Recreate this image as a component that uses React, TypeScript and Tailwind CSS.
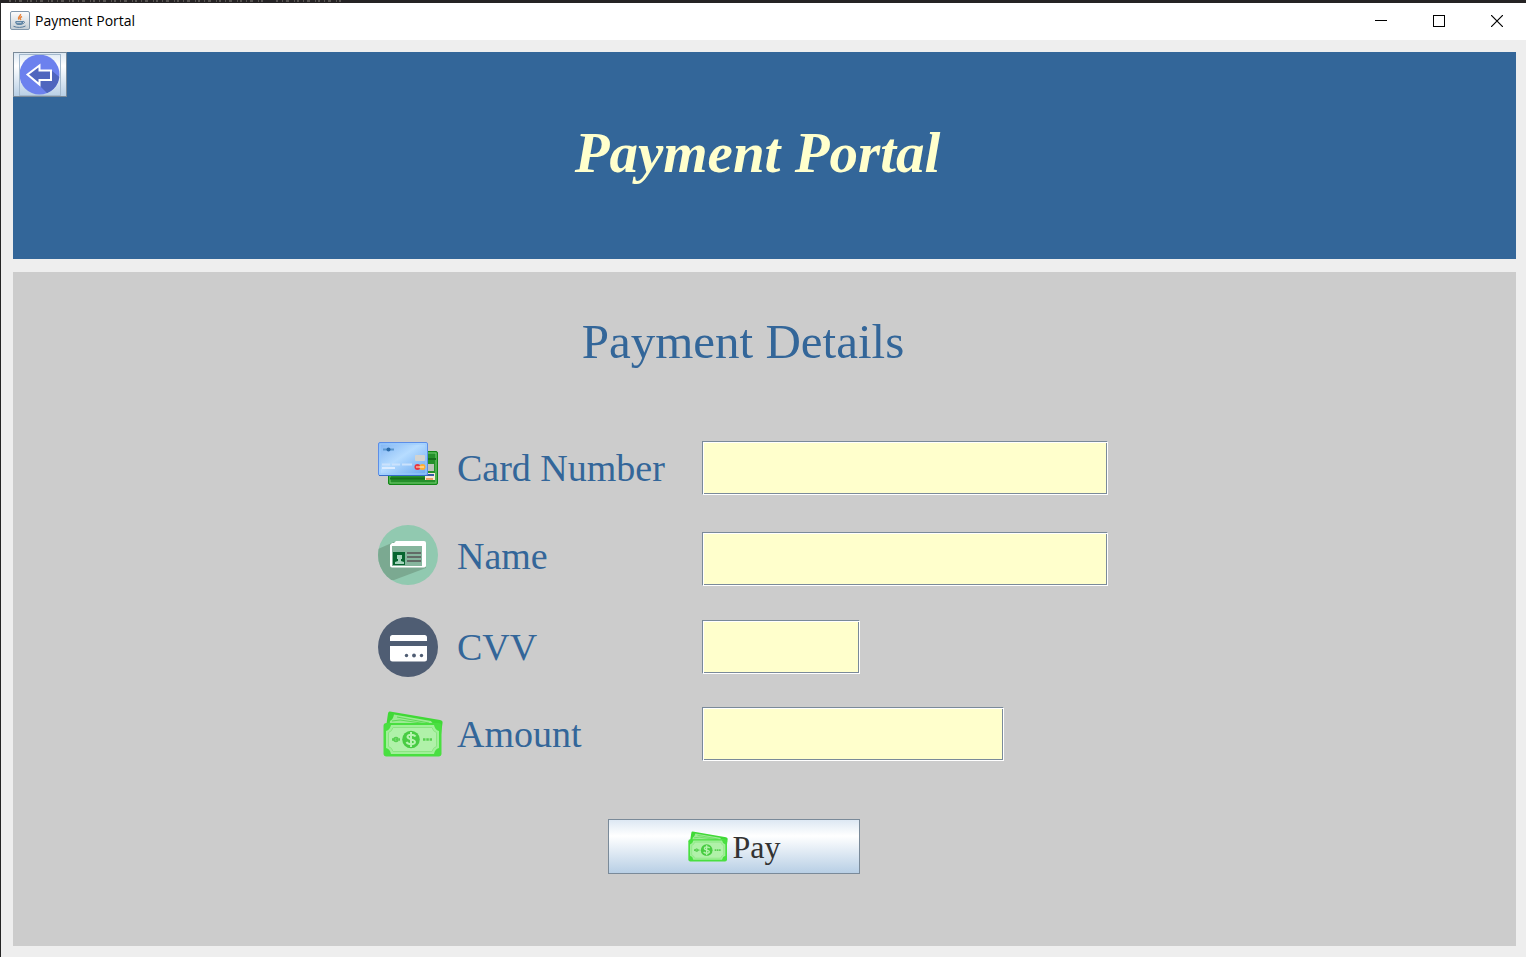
import React from "react";

function JavaIcon() {
  return (
    <svg width="20" height="20" viewBox="0 0 20 20" aria-hidden="true" className="shrink-0">
      <defs>
        <linearGradient id="javaBg" x1="0" y1="0" x2="0" y2="1">
          <stop offset="0" stopColor="#fdfdfd" />
          <stop offset="1" stopColor="#c3cdd3" />
        </linearGradient>
      </defs>
      <rect x="0.5" y="0.5" width="19" height="18" rx="1.500" fill="url(#javaBg)" stroke="#8298ac" />
      <path d="M10.500 3c1 1.600-3.500 2.800-1.500 5.500M12 5.500c-2 1-2.500 2-1 3.500" fill="none" stroke="#e8833a" strokeWidth="1.400" />
      <path d="M5.500 10h7.500v1.500c0 2-1 2.500-3.500 2.500s-4-.5-4-2.500z" fill="#5f86a5" />
      <path d="M13 10.500c2-.5 2 2-.5 2.300M3.500 15.300c3 1.500 9 1.500 12-.3M5.500 11.500h7" fill="none" stroke="#54799a" strokeWidth="1" />
      <path d="M6.500 11.600h5" stroke="#d5e0e8" strokeWidth="0.800" />
    </svg>
  );
}

function BackIcon() {
  return (
    <svg width="42" height="42" viewBox="0 0 42 42" aria-hidden="true">
      <defs>
        <clipPath id="backDisc">
          <circle cx="20.500" cy="20.500" r="20" />
        </clipPath>
      </defs>
      <circle cx="20.500" cy="20.500" r="20" fill="#6c81ee" />
      <path d="M20 31l1-4h11V16l12 10v16H31z" fill="#5066be" clipPath="url(#backDisc)" />
      <path d="M8.500 20.500l12-9v5h11.500v9.500H20.500v4.500z" fill="#5066be" stroke="#fff" strokeWidth="2" />
    </svg>
  );
}

function CardsIcon() {
  return (
    <svg width="60" height="44" viewBox="0 0 60 44" aria-hidden="true">
      <defs>
        <linearGradient id="blueCard" x1="0" y1="0" x2="1" y2="1">
          <stop offset="0" stopColor="#7eb2f2" />
          <stop offset="0.450" stopColor="#b6dcff" />
          <stop offset="1" stopColor="#65a4ef" />
        </linearGradient>
      </defs>
      <rect x="10.500" y="9.500" width="49" height="33" rx="1.500" fill="#25902b" stroke="#128716" />
      <rect x="12" y="11" width="46" height="30" fill="none" stroke="#74cf70" />
      <path d="M12 36.500h35M50 17h8" stroke="#176f1c" strokeWidth="2" />
      <rect x="48" y="22" width="8" height="7" fill="#bec5ba" />
      <rect x="47" y="31" width="10" height="7" fill="#f7e8d5" />
      <path d="M48 32h8v2h-8z" fill="#365ca7" />
      <path d="M48 36h7v2h-7z" fill="#eca26a" />
      <rect x="0.500" y="0.500" width="49" height="33" rx="1.500" fill="url(#blueCard)" stroke="#5c8ee8" />
      <rect x="2" y="2" width="46" height="30" fill="none" stroke="#9acbfd" />
      <path d="M1 33.500h48" stroke="#376dcb" />
      <path d="M5 7.500h4M12 7.500h4" stroke="#5b97d0" strokeWidth="2" />
      <circle cx="10.500" cy="7.500" r="2" fill="#296aa9" />
      <rect x="37" y="13" width="10" height="6" rx="1" fill="#d3d3cf" />
      <path d="M4 22.500h8M14 22.500h8M24 22.500h10" stroke="#cbe2fc" strokeWidth="2" />
      <path d="M4 26h13" stroke="#dcecff" strokeWidth="2" />
      <circle cx="39.500" cy="25" r="3" fill="#e93440" />
      <circle cx="44.500" cy="25" r="3" fill="#ffae32" />
      <path d="M38 25h8" stroke="#fff2ce" strokeWidth="1" />
    </svg>
  );
}

function IdIcon() {
  return (
    <svg width="60" height="61" viewBox="0 0 60 61" aria-hidden="true">
      <defs>
        <clipPath id="idDisc">
          <circle cx="30" cy="30" r="30" />
        </clipPath>
      </defs>
      <circle cx="30" cy="30" r="30" fill="#91c9b0" />
      <path d="M16 17L-2 25v30h18l32-12V20z" fill="#7ba991" clipPath="url(#idDisc)" />
      <path d="M18 16h28a2 2 0 0 1 2 2v22a2 2 0 0 1-2 2.500H14a2 2 0 0 1-2-2V20l2-2h2z" fill="#fff" />
      <rect x="14" y="21" width="30" height="20" fill="#86b59d" />
      <rect x="15" y="27" width="12" height="13" fill="#07652f" />
      <path d="M19 30h5v4h-1v2l3 1v2h-9v-2l3-1v-2h-1z" fill="#a4d4bc" />
      <path d="M29 28h14M29 32h14M29 36h14" stroke="#626b66" strokeWidth="2" />
    </svg>
  );
}

function CvvIcon() {
  return (
    <svg width="60" height="60" viewBox="0 0 60 60" aria-hidden="true">
      <circle cx="30" cy="30" r="30" fill="#4f5d73" />
      <rect x="12" y="18" width="37" height="26.500" rx="2.500" fill="#fff" />
      <path d="M12 24h37v5H12z" fill="#4f5d73" />
      <circle cx="28.500" cy="38.500" r="1.700" fill="#4f5d73" />
      <circle cx="36" cy="38.500" r="1.900" fill="#4f5d73" />
      <circle cx="43.500" cy="38.500" r="1.700" fill="#4f5d73" />
    </svg>
  );
}

function MoneyIcon({ className }: { className: string }) {
  return (
    <svg className={className} viewBox="0 0 60 46" aria-hidden="true">
      <path d="M7 0.500L57 9q3 .5 2.500 3l-4 31L3 16 5 2.500Q5.500 0 7 .5z" fill="#40d936" />
      <path d="M11 3.500l37 6.500q1 3 5.500 3l-1 6H6l1-9q3-1.500 4-6.500z" fill="#9ceb93" />
      <path d="M14 6l32 6M9 10l8-1 28 4" stroke="#5ed955" strokeWidth="1" fill="none" />
      <rect x="0.500" y="12" width="58" height="33.500" rx="3" fill="#49df40" />
      <path d="M8 14h43q1 5 5 6v17q-4 1-5 6H8q-1-5-5-6V20q4-1 5-6z" fill="#a1f099" />
      <path d="M10 16.500h39q1 4 4.500 5v14q-3.500 1-4.500 5H10q-1-4-4.500-5v-14q3.500-1 4.500-5z" fill="#b0f1a9" stroke="#8be582" />
      <circle cx="28" cy="28.500" r="8.800" fill="#48cc42" />
      <path d="M32.500 25.500c-1-2-7.500-3-8 .2-.3 3.300 7.500 2 7.500 5.300 0 3-7 2.800-8.500 0M28 21v15" fill="none" stroke="#b7f4b0" strokeWidth="2" />
      <circle cx="13" cy="28.500" r="2" fill="none" stroke="#57cf50" strokeWidth="1.500" />
      <path d="M9 28.500h8M40 28.500h9" stroke="#57cf50" strokeWidth="2.500" strokeDasharray="2.500 0.800" />
    </svg>
  );
}

const fields = [
  { id: "card-number", label: "Card Number", width: "w-full", icon: <CardsIcon />, iconAlign: "items-center pb-2" },
  { id: "name", label: "Name", width: "w-full", icon: <IdIcon />, iconAlign: "items-start" },
  { id: "cvv", label: "CVV", width: "w-[158px]", icon: <CvvIcon />, iconAlign: "items-end" },
  { id: "amount", label: "Amount", width: "w-[302px]", icon: <MoneyIcon className="h-[46px] w-[60px]" />, iconAlign: "items-center justify-end" },
];

export default function App() {
  return (
    <div className="flex min-h-screen flex-col border-l border-[#252525] bg-[#eee] font-['Liberation_Serif',serif]">
      <div className="h-[3px] bg-[#252324]">
        <svg width="344" height="2" aria-hidden="true" className="block">
          <path d="M8 1h254M275 1h67" stroke="#77736f" strokeWidth="2" strokeDasharray="2 4 1 3 3 5 1 2" opacity="0.600" />
        </svg>
      </div>
      <div className="flex h-[37px] items-center bg-white pb-0.5 pl-[9px] text-black">
        <JavaIcon />
        <span className="ml-[5px] font-['Open_Sans',sans-serif] text-sm">Payment Portal</span>
        <div className="ml-auto flex h-full">
          <button type="button" aria-label="Minimize" className="flex w-[58px] items-center justify-center">
            <svg width="12" height="12" aria-hidden="true"><path d="M0 5.500h12" stroke="#000" /></svg>
          </button>
          <button type="button" aria-label="Maximize" className="flex w-[58px] items-center justify-center">
            <svg width="12" height="12" aria-hidden="true"><rect x="0.500" y="0.500" width="11" height="11" fill="none" stroke="#000" /></svg>
          </button>
          <button type="button" aria-label="Close" className="flex w-[58px] items-center justify-center">
            <svg width="12" height="12" aria-hidden="true"><path d="M0 0l12 12M12 0L0 12" stroke="#000" strokeWidth="1.200" /></svg>
          </button>
        </div>
      </div>

      <div className="flex grow flex-col gap-[13px] pt-3 pr-[10px] pb-[11px] pl-3">
        <header className="flex h-[207px] flex-col bg-[#336699]">
          <button
            type="button"
            aria-label="Back"
            className="flex h-[45px] w-[54px] shrink-0 items-center justify-center border border-[#7a8a99] bg-linear-to-b from-[#dde8f3] via-white via-30% to-[#b8cfe5]"
          >
            <span className="flex h-[42px] w-[42px] items-center justify-center outline-1 -outline-offset-1 outline-[#a3b8cc]">
              <BackIcon />
            </span>
          </button>
          <h1 className="mt-6 pr-[14px] text-center text-[57px] leading-[64px] font-bold text-[#ffffcc] italic">Payment Portal</h1>
        </header>

        <main className="flex grow flex-col items-center bg-[#ccc] pt-[42px] pr-[43px] text-[#336699]">
          <h2 className="text-[49px] leading-[56px]">Payment Details</h2>
          <form className="mt-[71px] flex flex-col items-center" onSubmit={(e) => e.preventDefault()}>
            <div className="grid grid-cols-[65px_231px_406px] grid-rows-[54px_61px_61px_54px] gap-x-[14px] gap-y-[30px]">
              {fields.map((f) => (
                <React.Fragment key={f.id}>
                  <div className={`flex ${f.iconAlign}`}>{f.icon}</div>
                  <label htmlFor={f.id} className="self-center text-[38px] leading-[44px] whitespace-nowrap">{f.label}</label>
                  <input
                    id={f.id}
                    type="text"
                    className={`${f.width} ${f.id === "name" ? "self-end" : "self-center"} h-[54px] border border-t-[#7a8a99] border-r-white border-b-white border-l-[#7a8a99] bg-[#ffffcc] px-1 text-[32px] text-[#333] shadow-[inset_1px_1px_0_#fff,inset_-1px_-1px_0_#7a8a99] outline-none`}
                  />
                </React.Fragment>
              ))}
            </div>
            <button
              type="submit"
              className="mt-[58px] mr-[18px] flex h-[55px] w-[252px] items-center justify-center gap-[5px] border border-[#7a8a99] bg-linear-to-b from-[#dde8f3] via-white via-30% to-[#b8cfe5] text-[32px] leading-9 text-[#333]"
            >
              <MoneyIcon className="h-[31px] w-[40px]" />
              Pay
            </button>
          </form>
        </main>
      </div>
    </div>
  );
}
